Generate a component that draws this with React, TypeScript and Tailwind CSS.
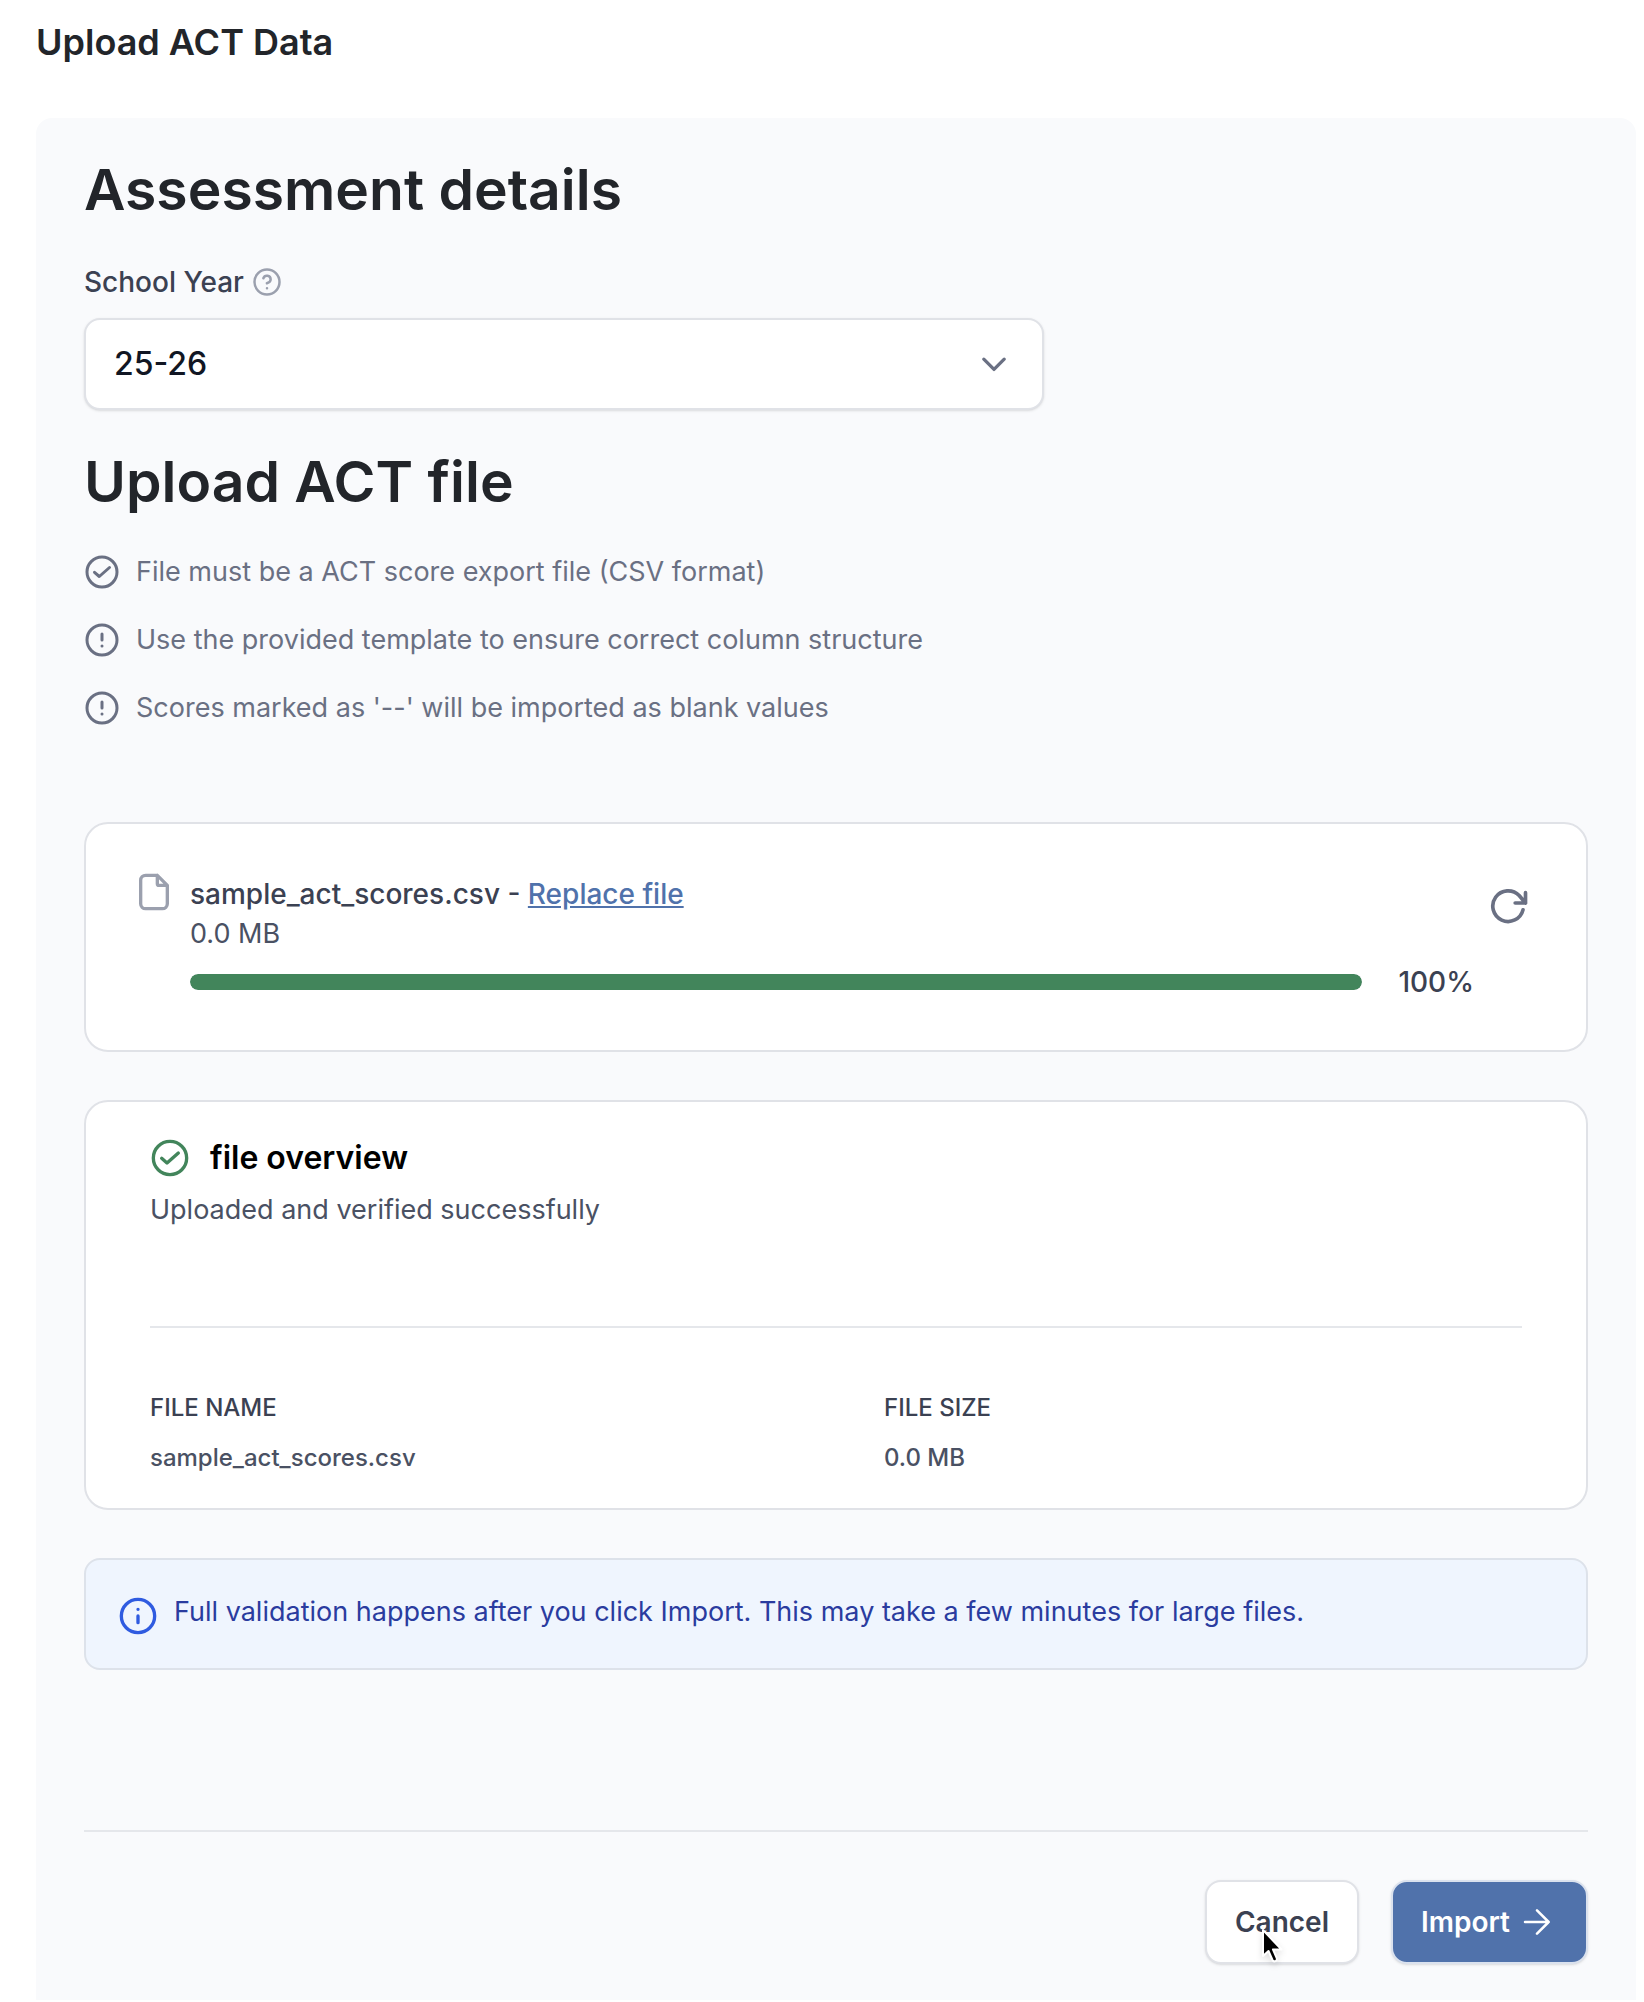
import React from 'react';

type IconProps = { className: string; width?: number; children: React.ReactNode };

function Icon({ className, width = 2, children }: IconProps) {
  return (
    <svg
      viewBox="0 0 24 24"
      fill="none"
      stroke="currentColor"
      strokeWidth={width}
      strokeLinecap="round"
      strokeLinejoin="round"
      aria-hidden="true"
      className={className}
    >
      {children}
    </svg>
  );
}

const CheckCircle = ({ className }: { className: string }) => (
  <Icon className={className}>
    <circle cx="12" cy="12" r="10" />
    <path d="M7 12.200 10.200 15 17 9" />
  </Icon>
);

const AlertCircle = ({ className }: { className: string }) => (
  <Icon className={className}>
    <circle cx="12" cy="12" r="10" />
    <path d="M12 8v4M12 16h.01" />
  </Icon>
);

const requirements = [
  { icon: CheckCircle, text: 'File must be a ACT score export file (CSV format)' },
  { icon: AlertCircle, text: 'Use the provided template to ensure correct column structure' },
  { icon: AlertCircle, text: "Scores marked as '--' will be imported as blank values" },
];

export default function App() {
  const progress = 100;
  return (
    <div className="bg-white pl-9 pr-2 font-['Inter',sans-serif] text-[27px] leading-10 text-[#4a5163]">
      <header className="pt-5">
        <h1 className="text-[36px] leading-[44px] font-semibold text-[#22252a]">Upload ACT Data</h1>
      </header>

      <main className="mt-[54px] rounded-t-2xl bg-[#f9fafc] px-12 pt-9 pb-9">
        <section>
          <h2 className="text-[57px] leading-[72px] font-semibold text-[#22252a]">Assessment details</h2>
          <div className="mt-9 flex items-center gap-2">
            <label htmlFor="year" className="text-[28px] font-medium text-[#3b4152]">School Year</label>
            <button type="button" aria-label="About school year" className="text-[#9ba0ae]">
              <Icon className="size-[30px]">
                <circle cx="12" cy="12" r="10" />
                <path d="M9.09 9a3 3 0 0 1 5.83 1c0 2-3 3-3 3M12 17h.01" />
              </Icon>
            </button>
          </div>
          <div className="relative mt-4 w-full max-w-[960px]">
            <select
              id="year"
              className="h-[92px] w-full appearance-none rounded-2xl border-2 border-[#e0e2e7] bg-white px-7 text-[32px] font-medium text-[#111623] shadow-sm"
            >
              <option>25-26</option>
            </select>
            <Icon className="pointer-events-none absolute top-7 right-8 size-9 text-[#6a7083]" width={2.2}>
              <path d="m5.200 8.800 6.800 6.800 6.800-6.800" />
            </Icon>
          </div>
        </section>

        <section className="mt-9">
          <h2 className="text-[57px] leading-[72px] font-semibold text-[#22252a]">Upload ACT file</h2>
          <ul className="mt-[34px] flex flex-col gap-7 text-[#6a7083]">
            {requirements.map(({ icon: Glyph, text }) => (
              <li key={text} className="flex items-center gap-4">
                <Glyph className="size-9 shrink-0" />
                <span>{text}</span>
              </li>
            ))}
          </ul>
        </section>

        <section className="mt-[94px] flex items-start rounded-3xl border-2 border-[#e0e2e7] bg-white py-12 pr-14 pl-12">
          <Icon className="size-10 shrink-0 text-[#9ba0ae]">
            <path d="M14 2H7a3 3 0 0 0-3 3v14a3 3 0 0 0 3 3h10a3 3 0 0 0 3-3V8l-6-6v5a1 1 0 0 0 1 1h5" />
          </Icon>
          <div className="ml-4 grow pt-0.5">
            <p className="text-[28px] font-medium text-[#3b4152]">
              sample_act_scores.csv -{' '}
              <a href="#replace" className="text-[#5072ab] underline">Replace file</a>
            </p>
            <p>0.0 MB</p>
            <div className="mt-2 flex items-center gap-9">
              <div
                role="progressbar"
                aria-label="Upload progress"
                aria-valuenow={progress}
                className="h-4 grow overflow-hidden rounded-full bg-[#e5e7eb]"
              >
                <div className="h-full rounded-full bg-[#42855b]" style={{ width: `${progress}%` }} />
              </div>
              <span className="text-[28px] font-medium text-[#3b4152]">{progress}%</span>
            </div>
          </div>
          <button type="button" aria-label="Upload again" className="mt-3.5 ml-4 text-[#6a7083]">
            <Icon className="size-10" width={2.2}>
              <path d="M21.300 4v6.200h-6.200M19.800 14.300A9.200 9.200 0 1 1 17.500 5.700L21.300 10.200" />
            </Icon>
          </button>
        </section>

        <section className="mt-12 rounded-3xl border-2 border-[#e0e2e7] bg-white px-16 pt-9 pb-[30px]">
          <div className="flex items-center gap-5">
            <CheckCircle className="size-10 shrink-0 text-[#42855b]" />
            <h3 className="text-[32px] font-semibold text-black">file overview</h3>
          </div>
          <p className="mt-3">Uploaded and verified successfully</p>
          <hr className="mt-24 border-t-2 border-[#e5e7eb]" />
          <dl className="mt-[60px] grid grid-cols-2 gap-x-24 text-[24px] font-medium">
            <div>
              <dt className="text-[#3b4152]">FILE NAME</dt>
              <dd className="mt-2.5">sample_act_scores.csv</dd>
            </div>
            <div>
              <dt className="text-[#3b4152]">FILE SIZE</dt>
              <dd className="mt-2.5">0.0 MB</dd>
            </div>
          </dl>
        </section>

        <section
          role="status"
          className="mt-12 flex items-start gap-4 rounded-2xl border-2 border-[#dde2ea] bg-[#eff5fe] px-8 py-8 text-[#2a3c9f]"
        >
          <Icon className="mt-1 size-10 shrink-0 text-[#2f5be0]">
            <circle cx="12" cy="12" r="10" />
            <path d="M12 16v-4M12 8h.01" />
          </Icon>
          <p>Full validation happens after you click Import. This may take a few minutes for large files.</p>
        </section>

        <footer className="mt-40 flex justify-end gap-8 border-t-2 border-[#e5e7eb] pt-12 text-[28px] font-semibold">
          <button
            type="button"
            className="relative h-[84px] rounded-2xl border-2 border-[#e0e2e7] bg-white px-7 text-[#3b4152] shadow-sm"
          >
            Cancel
            <svg viewBox="0 0 28 40" aria-hidden="true" className="absolute top-[46px] left-[54px] h-10 w-7 drop-shadow-md">
              <path
                d="M2 2v26l5.500-5 4 9q1 2 3 1.100t1.200-3L12 21.500h8.500z"
                fill="#000"
                stroke="#fff"
                strokeWidth="2"
                strokeLinejoin="round"
              />
            </svg>
          </button>
          <button
            type="button"
            className="flex h-[84px] items-center gap-2 rounded-2xl border-2 border-[#dbe2ee] bg-[#5072ab] px-7 text-white shadow-sm"
          >
            Import
            <Icon className="size-10" width={1.5}>
              <path d="M4.200 12h14.200M11.400 5l7 7-7 7" />
            </Icon>
          </button>
        </footer>
      </main>
    </div>
  );
}
